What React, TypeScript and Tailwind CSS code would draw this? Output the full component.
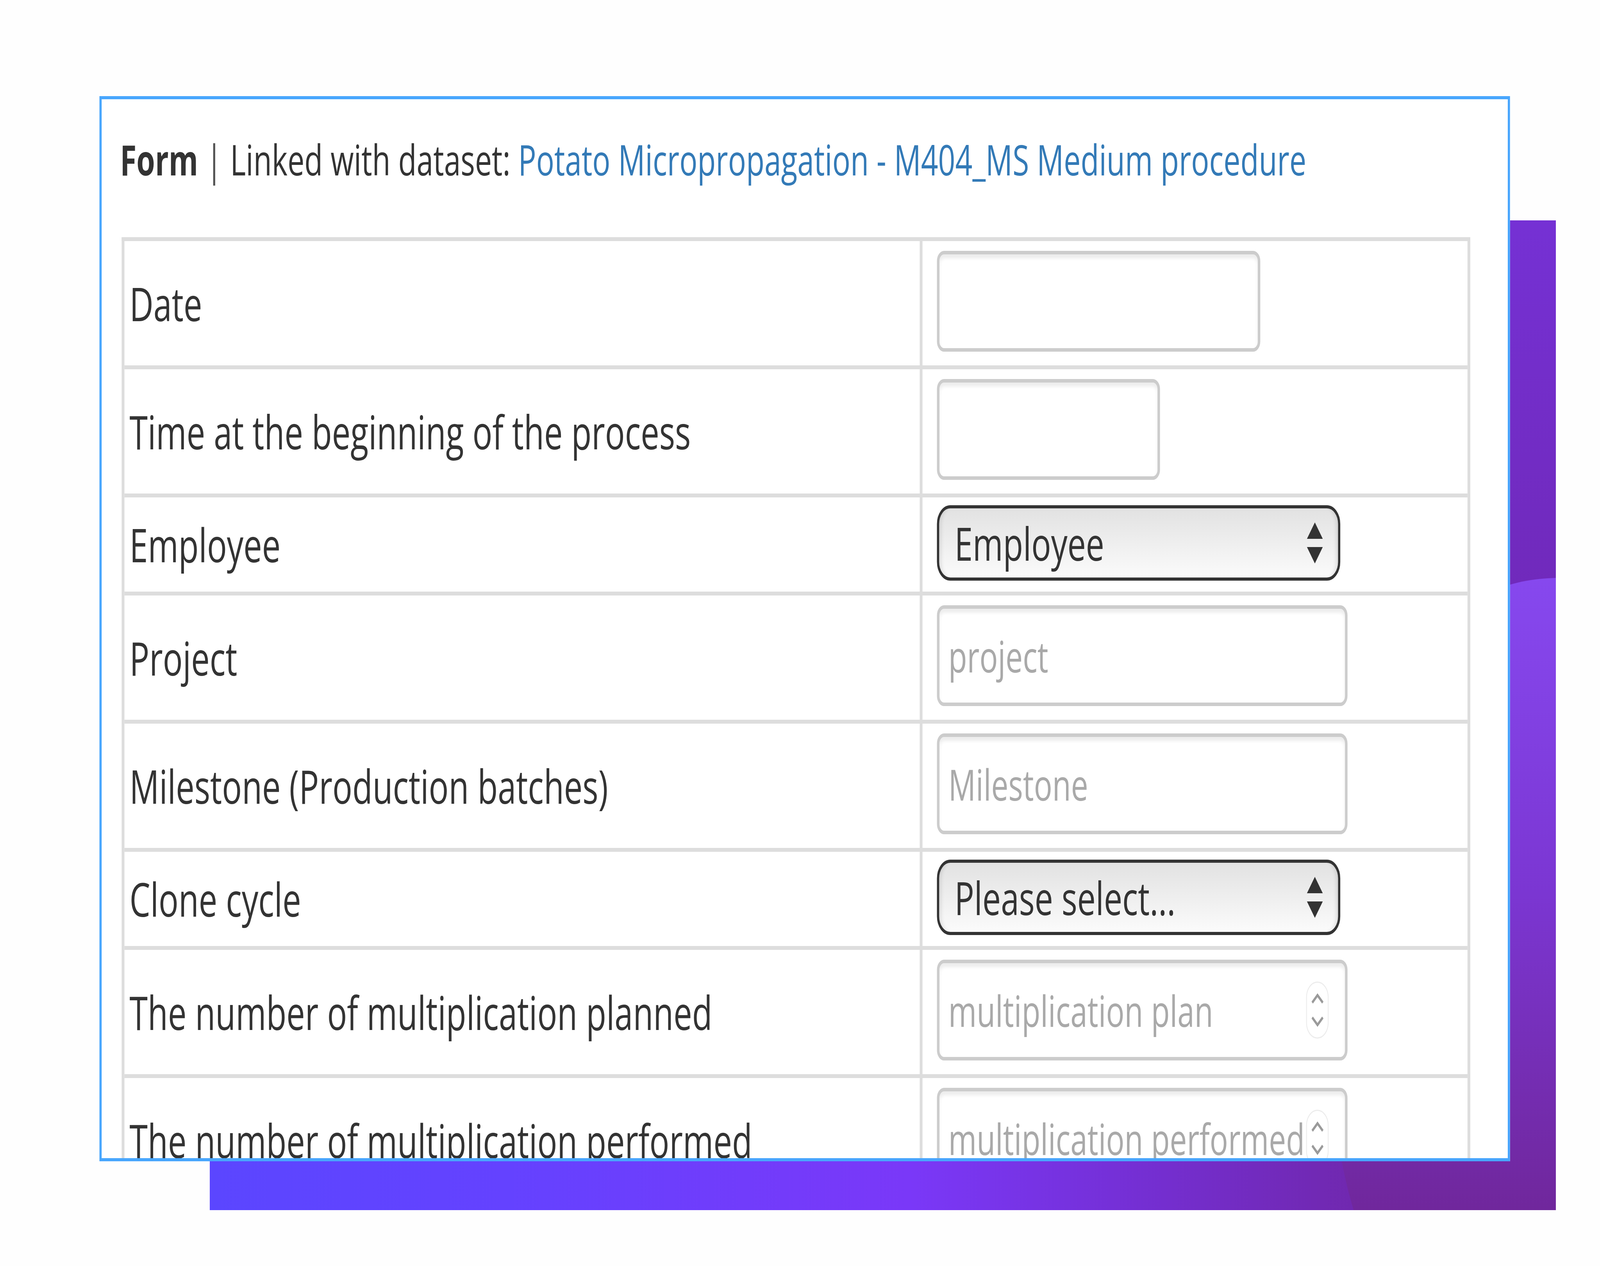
import React, { useEffect, useState } from "react";

function Spinner() {
  return (
    <span className="absolute right-[59px] top-1/2 -translate-y-1/2 w-[81px] h-[146px] rounded-full border-[3px] border-[#ececec] flex flex-col items-center justify-center gap-[30px]">
      <svg width="46" height="28" viewBox="0 0 46 28">
        <path d="M4 24 L23 5 L42 24" fill="none" stroke="#9a9a9a" strokeWidth="7" />
      </svg>
      <svg width="46" height="28" viewBox="0 0 46 28">
        <path d="M4 4 L23 23 L42 4" fill="none" stroke="#9a9a9a" strokeWidth="7" />
      </svg>
    </span>
  );
}

function TextBox({
  widthClass,
  placeholder,
  spinner,
}: {
  widthClass: string;
  placeholder?: string;
  spinner?: boolean;
}) {
  return (
    <div
      className={`${widthClass} relative h-[258px] rounded-[26px] border-[9px] border-[#cccccc] bg-white shadow-[inset_0_10px_10px_rgba(0,0,0,0.075)] flex items-center pl-[32px] overflow-hidden`}
    >
      {placeholder ? (
        <span className="text-[110px] leading-none text-[#a9a9a9] whitespace-nowrap">{placeholder}</span>
      ) : null}
      {spinner ? <Spinner /> : null}
    </div>
  );
}

function SelectBox({ label }: { label: string }) {
  return (
    <div className="w-[1452px] h-[193px] rounded-[48px] border-[8px] border-[#333333] bg-linear-to-b from-[#e2e2e2] to-[#fbfbfb] shadow-[inset_14px_0_14px_-10px_rgba(0,0,0,0.14),inset_-14px_0_14px_-10px_rgba(0,0,0,0.14)] flex items-center justify-between pl-[55px] pr-[55px]">
      <span className="text-[118px] leading-none text-[#333333] whitespace-nowrap">{label}</span>
      <svg width="57" height="105" viewBox="0 0 57 105">
        <path d="M28.5 0 L57 42 L0 42 Z" fill="#333333" />
        <path d="M0 63 L57 63 L28.5 105 Z" fill="#333333" />
      </svg>
    </div>
  );
}

function Row({
  label,
  kind,
  children,
}: {
  label: string;
  kind: "input" | "select";
  children: React.ReactNode;
}) {
  return (
    <div
      className={`flex border-b-[10px] border-[#dddddd] ${kind === "input" ? "h-[328px]" : "h-[251px]"}`}
    >
      <div className="w-[2873px] shrink-0 border-r-[10px] border-[#dddddd] flex items-center pl-[18px]">
        <span className="text-[119px] leading-none text-[#333333] whitespace-nowrap">{label}</span>
      </div>
      <div className={`flex-1 pl-[52px] ${kind === "input" ? "pt-[25px]" : "pt-[20px]"}`}>{children}</div>
    </div>
  );
}

function Backdrop() {
  return (
    <div className="absolute left-[755px] top-[564px] w-[4846px] h-[2533px]">
      <svg width="4846" height="2533" viewBox="0 0 4846 2533" className="block">
        <defs>
          <linearGradient id="base" x1="0" y1="0" x2="1" y2="0">
            <stop offset="0" stopColor="#5b46ff" />
            <stop offset="0.22" stopColor="#6442ff" />
            <stop offset="0.52" stopColor="#7a38f8" />
            <stop offset="0.67" stopColor="#7530d8" />
            <stop offset="0.82" stopColor="#7129b5" />
            <stop offset="1" stopColor="#6d2595" />
          </linearGradient>
          <linearGradient id="tr" x1="0" y1="0" x2="0" y2="1">
            <stop offset="0" stopColor="#7531d4" />
            <stop offset="1" stopColor="#7029ba" />
          </linearGradient>
          <linearGradient id="wave" gradientUnits="userSpaceOnUse" x1="0" y1="917" x2="0" y2="2533">
            <stop offset="0" stopColor="#8648ee" />
            <stop offset="0.12" stopColor="#8444e8" />
            <stop offset="0.5" stopColor="#7b36d2" />
            <stop offset="1" stopColor="#70279c" />
          </linearGradient>
        </defs>
        <rect x="0" y="0" width="4846" height="2533" fill="url(#base)" />
        <rect x="4300" y="0" width="546" height="1000" fill="url(#tr)" />
        <path
          d="M4846 915 C4600 920 4300 1000 4150 1500 C4000 2000 4020 2300 4118 2533 L4846 2533 Z"
          fill="url(#wave)"
        />
      </svg>
    </div>
  );
}

type Fit = { sx: number; sy: number };

function getFit(): Fit {
  if (typeof window === "undefined") return { sx: 1, sy: 1 };
  return { sx: window.innerWidth / 5760, sy: window.innerHeight / 3240 };
}

export default function App() {
  const [fit, setFit] = useState<Fit>(getFit);

  useEffect(() => {
    const onResize = () => setFit(getFit());
    onResize();
    window.addEventListener("resize", onResize);
    return () => window.removeEventListener("resize", onResize);
  }, []);

  return (
    <div className="w-screen h-screen overflow-hidden bg-[#fefefe]">
      <div
        className="relative w-[5760px] h-[3240px] bg-[#fefefe] overflow-hidden origin-top-left font-['Open_Sans',sans-serif]"
        style={{ transform: `scale(${fit.sx}, ${fit.sy})` }}
      >
        <Backdrop />
        <div className="relative ml-[358px] mt-[246px] w-[5078px] h-[2726px] border-[8px] border-[#48a6fd] bg-white overflow-hidden pt-[100px] pl-[66px]">
          <div className="text-[108px] leading-none text-[#333333] whitespace-nowrap">
            <span className="font-bold">Form</span>
            <span className="text-[#555555]"> | </span>
            <span>Linked with dataset: </span>
            <span className="text-[#337ab7]">Potato Micropropagation - M404_MS Medium procedure</span>
          </div>
          <div className="ml-[6px] mt-[145px] w-[4855px] border-x-[10px] border-t-[10px] border-[#dddddd]">
            <Row label="Date" kind="input">
              <TextBox widthClass="w-[1164px]" />
            </Row>
            <Row label="Time at the beginning of the process" kind="input">
              <TextBox widthClass="w-[803px]" />
            </Row>
            <Row label="Employee" kind="select">
              <SelectBox label="Employee" />
            </Row>
            <Row label="Project" kind="input">
              <TextBox widthClass="w-[1478px]" placeholder="project" />
            </Row>
            <Row label="Milestone (Production batches)" kind="input">
              <TextBox widthClass="w-[1478px]" placeholder="Milestone" />
            </Row>
            <Row label="Clone cycle" kind="select">
              <SelectBox label="Please select..." />
            </Row>
            <Row label="The number of multiplication planned" kind="input">
              <TextBox widthClass="w-[1478px]" placeholder="multiplication plan" spinner />
            </Row>
            <Row label="The number of multiplication performed" kind="input">
              <TextBox widthClass="w-[1478px]" placeholder="multiplication performed" spinner />
            </Row>
          </div>
        </div>
      </div>
    </div>
  );
}
